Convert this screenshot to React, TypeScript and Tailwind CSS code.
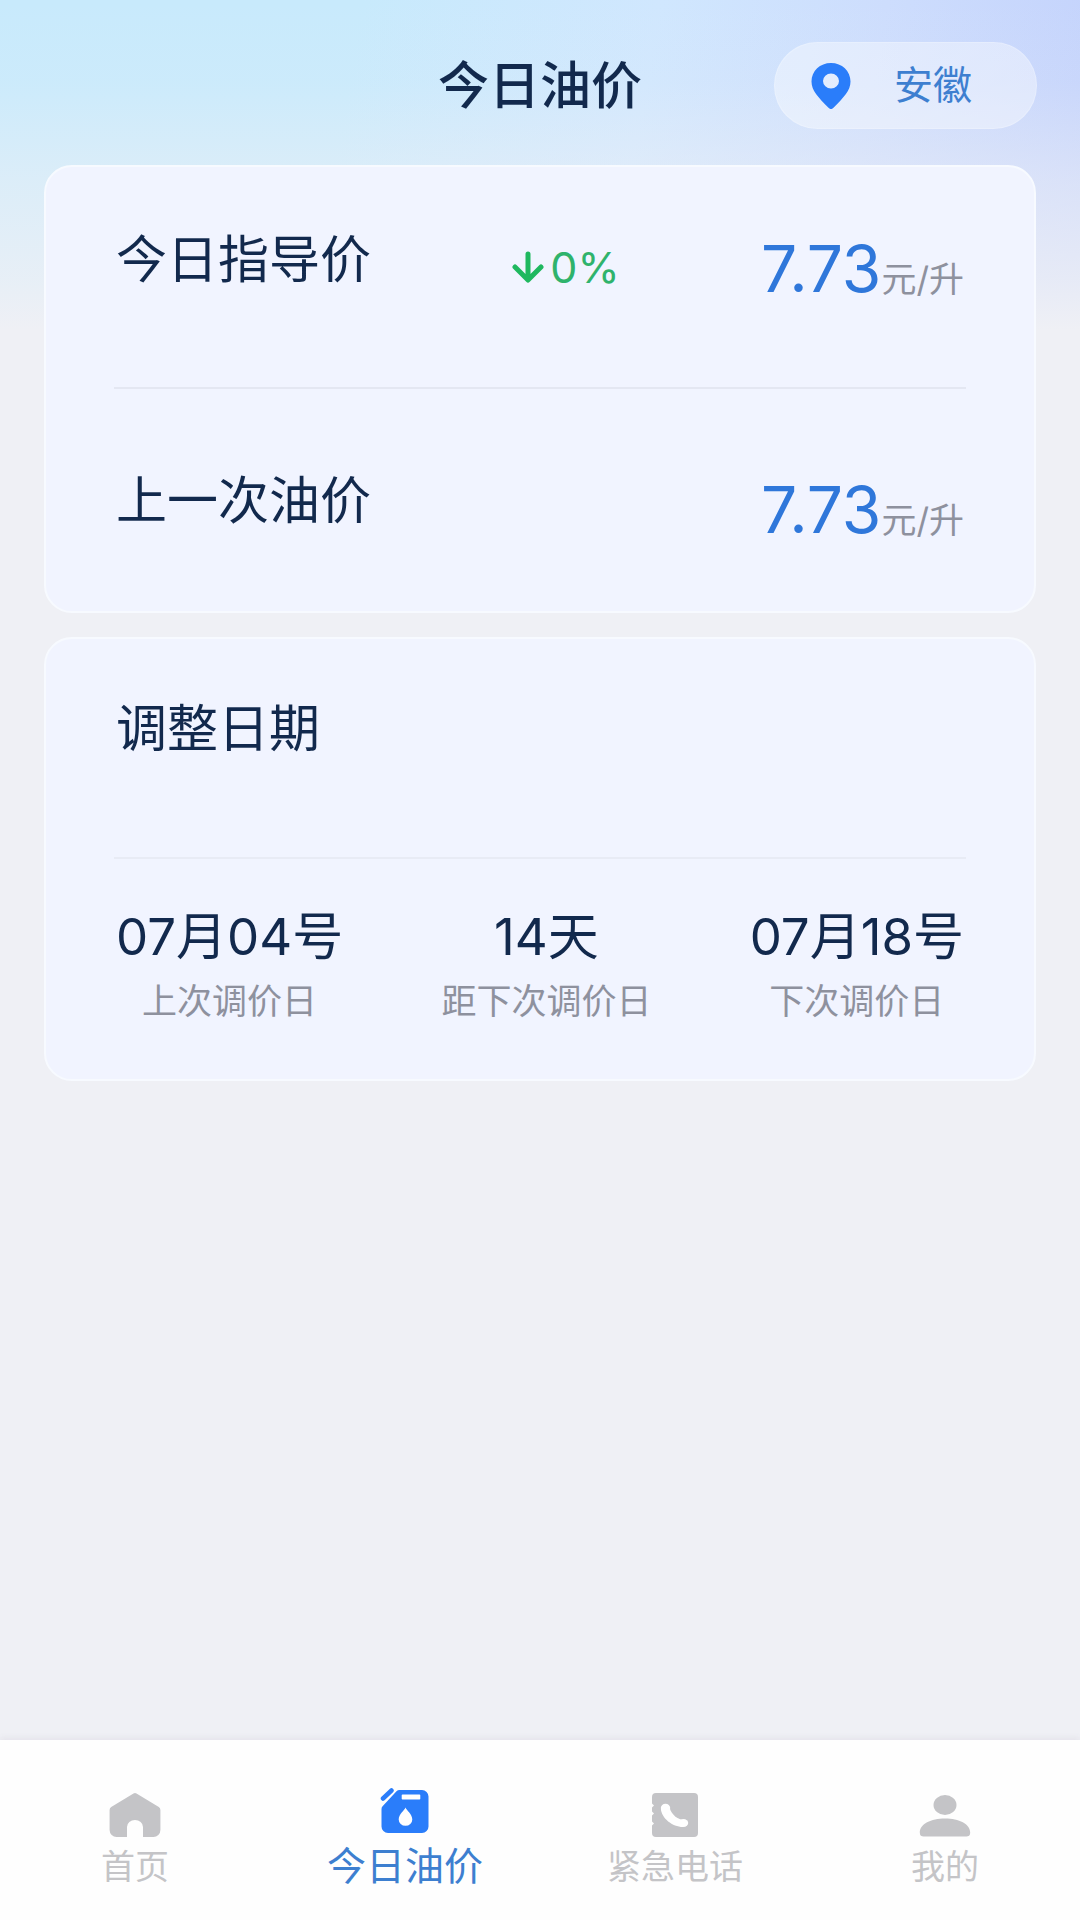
import * as React from "react"

const prices = [
  { label: "今日指导价", change: "0%", value: "7.73" },
  { label: "上一次油价", change: null, value: "7.73" },
]

const dates = [
  { value: "07月04号", label: "上次调价日" },
  { value: "14天", label: "距下次调价日" },
  { value: "07月18号", label: "下次调价日" },
]

const HomeIcon = () => (
  <svg viewBox="0 0 52 44" className="h-11 w-[52px]" fill="currentColor" aria-hidden="true">
    <path d="M24.500.6a2.500 2.500 0 0 1 3 0L49.800 14a3.500 3.500 0 0 1 1.600 3V37a7 7 0 0 1-7 7H34V34a8 7 0 0 0-16 0v10H7.600a7 7 0 0 1-7-7V17a3.500 3.500 0 0 1 1.600-3z" />
  </svg>
)

const FuelIcon = () => (
  <svg viewBox="0 0 50 46" className="h-[46px] w-[50px]" aria-hidden="true">
    <path d="M3 10.500 11.500 2.500" stroke="currentColor" strokeWidth="4.500" strokeLinecap="round" />
    <path
      fill="currentColor"
      fillRule="evenodd"
      d="M19.500 2H42a6.500 6.500 0 0 1 6.500 6.500v30A6.500 6.500 0 0 1 42 45H8a6.500 6.500 0 0 1-6.500-6.500V21a4 4 0 0 1 1.300-3L16.500 3.300A4.500 4.500 0 0 1 19.500 2zM22.500 6.500a.8.8 0 0 0-.8.8v3.400c0 .5.3.8.8.8h17c.5 0 .8-.3.8-.8V7.300a.8.8 0 0 0-.8-.8zM25.500 19.500c-1 3-6.800 6.500-6.800 12a6.800 6.300 0 0 0 13.600 0c0-5.500-5.800-9-6.800-12z"
    />
  </svg>
)

const PhoneBookIcon = () => (
  <svg viewBox="0 0 46 44" className="h-11 w-[46px]" aria-hidden="true">
    <path
      fill="currentColor"
      d="M4 0h38a4 4 0 0 1 4 4v36a4 4 0 0 1-4 4H4a4 4 0 0 1-4-4v-7.500l2-2-2-2v-6l2-2-2-2v-4l2-2-2-2V4a4 4 0 0 1 4-4z"
    />
    <g fill="#fff">
      <ellipse cx="13.500" cy="15" rx="4.700" ry="4.300" />
      <ellipse cx="31.500" cy="30" rx="4.700" ry="4" />
      <path d="M8.900 16c.6 9 11.600 18 22.100 18l1-7c-5.500 0-12.500-5-14.300-12z" />
    </g>
  </svg>
)

const UserIcon = () => (
  <svg viewBox="0 0 52 44" className="h-11 w-[52px]" fill="currentColor" aria-hidden="true">
    <ellipse cx="26" cy="12" rx="11.500" ry="10" />
    <path d="M.8 39.500C.8 31 12 25.500 26 25.500S51.200 31 51.200 39.500c0 3-1.500 4-4 4H4.800c-2.500 0-4-1-4-4z" />
  </svg>
)

const tabs = [
  { label: "首页", icon: HomeIcon, active: false },
  { label: "今日油价", icon: FuelIcon, active: true },
  { label: "紧急电话", icon: PhoneBookIcon, active: false },
  { label: "我的", icon: UserIcon, active: false },
]

const Card = ({ children }: { children: React.ReactNode }) => (
  <section className="rounded-[28px] border-2 border-[#f7faff] bg-[#f1f4ff] px-[68px]">{children}</section>
)

export default function App() {
  return (
    <div className="flex min-h-screen flex-col bg-[#eff0f5] bg-[linear-gradient(180deg,rgba(239,240,245,0)_0%,rgba(239,240,245,0.1)_25%,rgba(239,240,245,0.5)_55%,rgba(239,240,245,0.8)_85%,#eff0f5_100%),linear-gradient(100deg,#c8eafc_0%,#c8eafc_32%,#d0e7fe_58%,#cdddfd_78%,#c4d3fc_98%)] bg-[length:100%_330px] bg-no-repeat font-['Inter','Noto_Sans_CJK_SC',sans-serif] text-[#12294d]">
      <header className="grid grid-cols-[1fr_auto_1fr] items-center px-[43px] pt-[42px] pb-9">
        <h1 className="col-start-2 text-[51px] leading-[60px] font-medium">今日油价</h1>
        <button
          type="button"
          className="flex h-[87px] items-center justify-self-end rounded-full border border-white/20 bg-white/40 pr-16 pl-9 text-[39px] text-[#3d7fd0]"
        >
          <svg viewBox="0 0 40 46" className="mr-[43px] h-[46px] w-10" aria-hidden="true">
            <path
              fill="#2a7dfa"
              fillRule="evenodd"
              d="M20 0C9 0 .5 8 .5 18.500c0 9 6.500 15.500 17 26.300a3.500 3.500 0 0 0 5 0c10.500-10.800 17-17.300 17-26.300C39.500 8 31 0 20 0zm0 10.500a8 7.500 0 1 1 0 15 8 7.500 0 0 1 0-15z"
            />
          </svg>
          安徽
        </button>
      </header>

      <main className="flex flex-1 flex-col gap-6 px-11">
        <Card>
          <div className="divide-y-2 divide-[#e4e7f2]">
            {prices.map((item) => (
              <div key={item.label} className="flex h-[222px] items-center justify-between px-0.5 last:pt-9">
                <h2 className="pb-[34px] text-[51px] leading-[60px]">{item.label}</h2>
                {item.change && (
                  <p className="flex items-center gap-1.5 pb-5 text-[43px] leading-[60px] text-[#2fb36c]">
                    <svg viewBox="0 0 32 32" className="size-8" fill="none" stroke="#1fb85f" aria-hidden="true">
                      <path d="M16 3v25M3 16l13 13 13-13" strokeWidth="5" strokeLinecap="round" strokeLinejoin="round" />
                    </svg>
                    {item.change}
                  </p>
                )}
                <p className="leading-[60px]">
                  <span className="text-[64px] text-[#2f77da]">{item.value}</span>
                  <span className="text-[35px] text-[#8e919e]">元/升</span>
                </p>
              </div>
            ))}
          </div>
        </Card>

        <Card>
          <h2 className="border-b-2 border-[#e8ebf5] px-0.5 pt-[60px] pb-[98px] text-[51px] leading-[60px]">调整日期</h2>
          <ul className="flex justify-between px-0.5 pt-12 pb-[50px] text-center">
            {dates.map((item) => (
              <li key={item.label}>
                <p className="text-[51px] leading-[60px]">{item.value}</p>
                <p className="mt-1.5 text-[35px] leading-[56px] text-[#8e919e]">{item.label}</p>
              </li>
            ))}
          </ul>
        </Card>
      </main>

      <nav className="grid h-[180px] grid-cols-4 bg-[#fefefe] shadow-[0_-2px_6px_rgba(120,90,110,0.08)]">
        {tabs.map(({ label, icon: Icon, active }) => (
          <a
            key={label}
            href="#"
            aria-current={active ? "page" : undefined}
            className={
              active
                ? "flex flex-col items-center pt-12 text-[#2a7dfa]"
                : "flex flex-col items-center pt-[53px] text-[#c4c4c7]"
            }
          >
            <Icon />
            <span className={active ? "mt-1.5 text-[39px] leading-[52px] text-[#3d7fd0]" : "mt-1.5 text-[34px] leading-[48px]"}>
              {label}
            </span>
          </a>
        ))}
      </nav>
    </div>
  )
}
